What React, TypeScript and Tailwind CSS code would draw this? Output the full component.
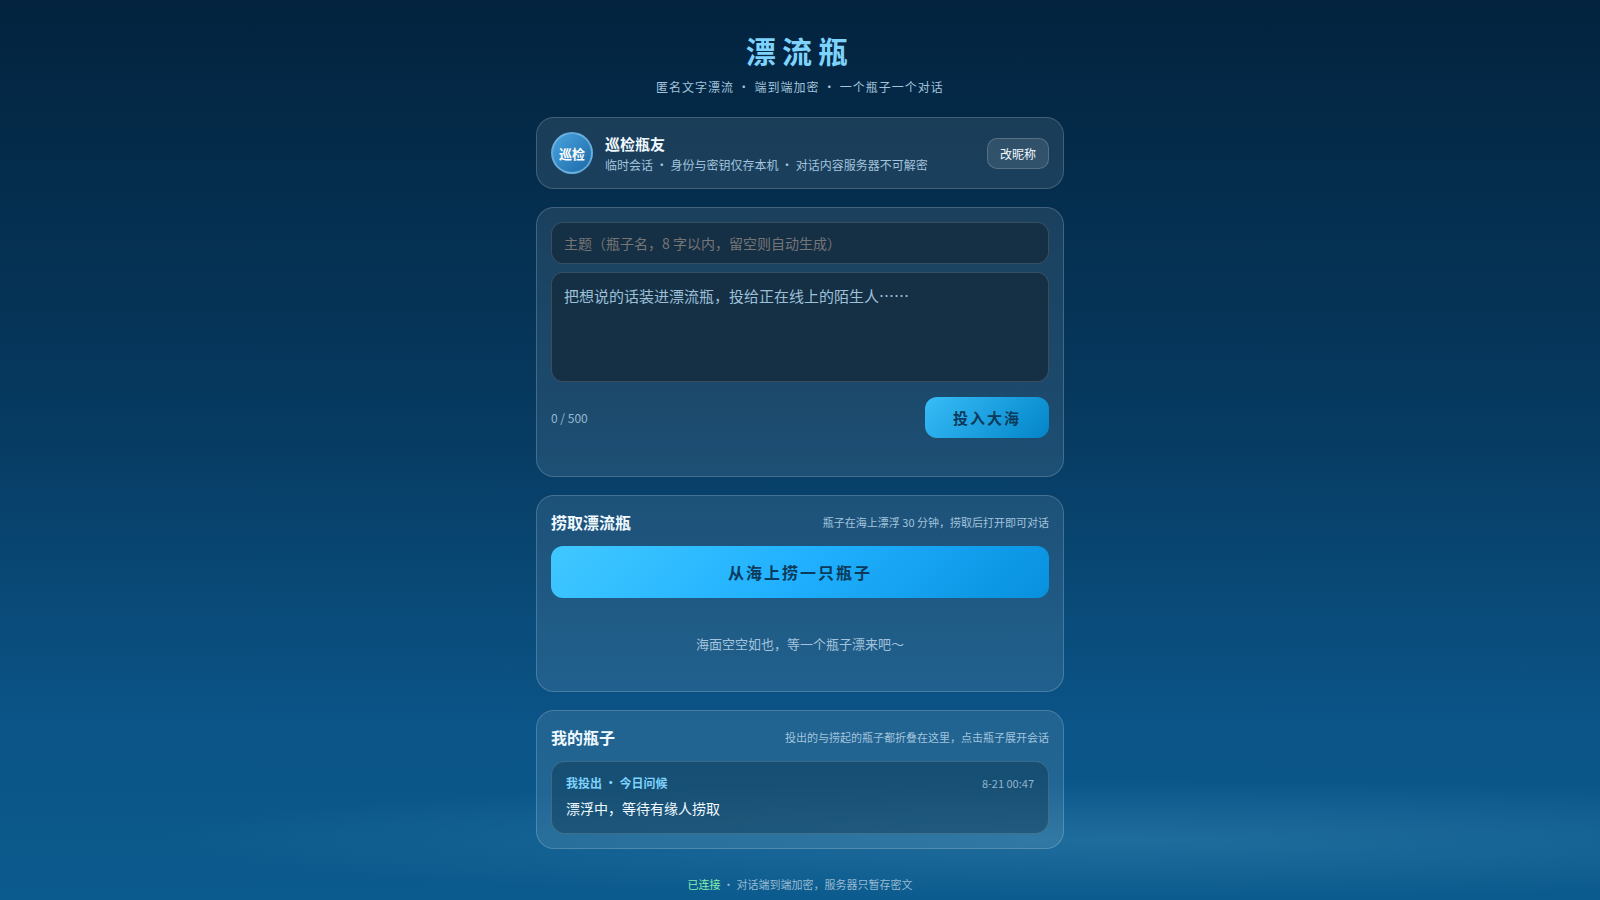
const font = '[font-family:"Noto_Sans_CJK_SC","Noto_Sans",sans-serif]';

function SectionHead({ title, hint }: { title: string; hint: string }) {
  return (
    <div className="flex items-center justify-between h-[24px] mb-[12px]">
      <h2 className="text-[16px] font-bold text-[#f0f9ff] leading-[24px]">{title}</h2>
      <span className="text-[11px] text-[#a3c4dc]">{hint}</span>
    </div>
  );
}

export default function App() {
  return (
    <div className={`relative h-screen overflow-hidden bg-[linear-gradient(180deg,#03233e_0%,#06395f_45%,#0b5487_80%,#0c5b8e_100%)] ${font}`}>
      <div className="absolute inset-x-0 bottom-0 h-[150px] bg-[radial-gradient(ellipse_60%_40%_at_70%_60%,rgba(80,160,200,0.28),transparent_100%)]" />
      <div className="relative mx-auto w-[528px] pt-[30px] flex flex-col">
        <header className="text-center mb-[20px]">
          <h1 className="text-[30px] font-bold leading-[40px] tracking-[6px] text-[#7dd3fc]">漂流瓶</h1>
          <p className="mt-[7px] text-[12px] leading-[20px] tracking-[1px] text-[#a3c4dc]">匿名文字漂流 · 端到端加密 · 一个瓶子一个对话</p>
        </header>

        <section className="flex items-center gap-[12px] h-[72px] px-[14px] rounded-[18px] border border-white/[0.18] bg-white/[0.09] mb-[18px]">
          <div className="w-[42px] h-[42px] shrink-0 pt-px rounded-full border-2 border-[#7dbce4]/70 bg-[linear-gradient(135deg,#4aa3de,#1a6aa8)] flex items-center justify-center text-[13px] font-bold text-white">巡检</div>
          <div className="flex-1 min-w-0 pt-[2px]">
            <div className="text-[15px] font-semibold leading-[20px] text-[#f0f9ff]">巡检瓶友</div>
            <div className="mt-px text-[12px] leading-[20px] text-[#a3c4dc]">临时会话 · 身份与密钥仅存本机 · 对话内容服务器不可解密</div>
          </div>
          <button className="w-[62px] h-[31px] pt-px rounded-[10px] border border-white/[0.18] bg-white/10 text-[12px] text-[#f0f9ff]">改昵称</button>
        </section>

        <section className="h-[270px] p-[14px] rounded-[18px] border border-white/[0.18] bg-white/[0.09] mb-[18px]">
          <input
            placeholder="主题（瓶子名，8 字以内，留空则自动生成）"
            className="block w-full h-[42px] px-[12px] rounded-[12px] border border-white/15 bg-[#152f45] text-[14px] outline-none placeholder:text-[#757575]"
          />
          <textarea
            placeholder="把想说的话装进漂流瓶，投给正在线上的陌生人……"
            className="block w-full h-[110px] mt-[8px] px-[12px] pt-[11px] pb-[9px] rounded-[12px] border border-white/15 bg-[#152f45] text-[15px] leading-[24px] outline-none resize-none placeholder:text-[#9cc0d8]"
          />
          <div className="flex items-center justify-between mt-[15px]">
            <span className="text-[12px] text-[#96bad2]">0 / 500</span>
            <button className="w-[124px] h-[41px] pt-px rounded-[12px] bg-[linear-gradient(135deg,#38bdf8,#0284c7)] text-[15px] font-bold tracking-[2px] text-[#0b3a5a]">投入大海</button>
          </div>
        </section>

        <section className="h-[197px] p-[14px] rounded-[18px] border border-white/[0.18] bg-white/[0.09] mb-[18px]">
          <SectionHead title="捞取漂流瓶" hint="瓶子在海上漂浮 30 分钟，捞取后打开即可对话" />
          <button className="w-full h-[52px] rounded-[12px] bg-[linear-gradient(135deg,#40c8ff,#20b0ff_50%,#0790dd)] text-[16px] font-bold tracking-[2px] text-[#0b3a5a]">从海上捞一只瓶子</button>
          <p className="mt-[36px] text-center text-[13px] leading-[20px] text-[#a3c4dc]">海面空空如也，等一个瓶子漂来吧～</p>
        </section>

        <section className="h-[139px] p-[14px] rounded-[18px] border border-white/[0.18] bg-white/[0.09]">
          <SectionHead title="我的瓶子" hint="投出的与捞起的瓶子都折叠在这里，点击瓶子展开会话" />
          <div className="h-[73px] px-[14px] pt-[11px] rounded-[14px] border border-white/15 bg-[#0a2f47]/40">
            <div className="flex items-center justify-between h-[20px]">
              <span className="text-[12px] font-bold text-[#7dd3fc]">我投出 · 今日问候</span>
              <span className="text-[11px] text-[#8fb4cc]">8-21 00:47</span>
            </div>
            <p className="mt-[4px] text-[14px] leading-[22px] text-[#f0f9ff]">漂浮中，等待有缘人捞取</p>
          </div>
        </section>

        <footer className="mt-[25px] text-center text-[11px] leading-[20px] text-[#96bad2]">
          <span className="text-[#86efac]">已连接</span> · 对话端到端加密，服务器只暂存密文
        </footer>
      </div>
    </div>
  );
}
